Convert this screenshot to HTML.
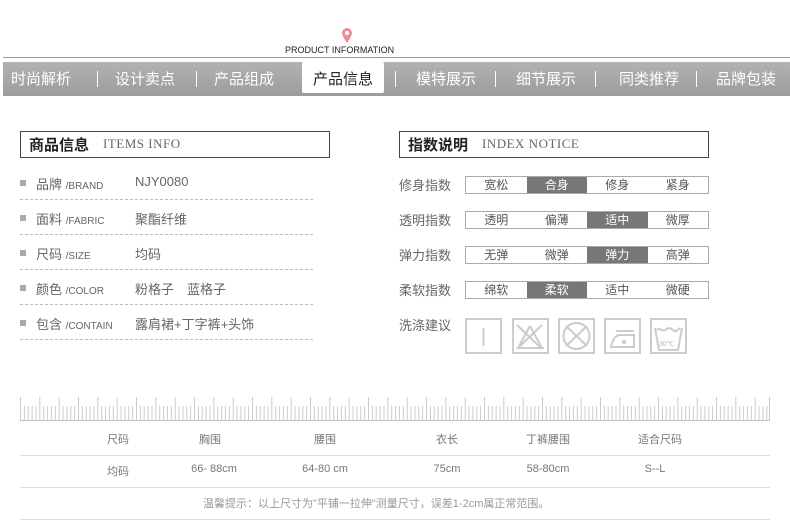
<!DOCTYPE html>
<html><head><meta charset="utf-8"><style>
*{margin:0;padding:0;box-sizing:border-box}
body{width:790px;height:528px;background:#fff;position:relative;overflow:hidden;font-family:"Liberation Sans","Noto Sans CJK SC",sans-serif;color:#555}
.a{position:absolute;white-space:nowrap}
.nav{position:absolute;left:3px;top:62px;width:787px;height:34px;background:linear-gradient(#b3b1b2,#9d9b9c)}
.nav span{position:absolute;top:6px;font-size:15px;color:#fff}
.sep{position:absolute;top:9px;width:1px;height:16px;background:#fff}
.box{position:absolute;height:27px;border:1px solid #444;width:310px}
.box b{position:absolute;left:8px;top:2px;font-size:15px;color:#222}
.box i{position:absolute;top:4px;font-style:normal;font-family:"Liberation Serif",serif;font-size:13px;color:#666;letter-spacing:0.5px}
.row{position:absolute;left:20px;font-size:13px;color:#666}
.sq{position:absolute;left:0;top:6px;width:6px;height:6px;background:#aaa}
.dash{position:absolute;left:20px;width:293px;border-top:1px dashed #bbb}
.lab{position:absolute;left:399px;font-size:13px;color:#666}
.opt{position:absolute;left:465px;width:244px;height:18px;border:1px solid #aaa;display:flex}
.opt div{flex:1;text-align:center;font-size:12px;line-height:16px;color:#555}
.opt .on{background:#777;color:#fff}
.hl{position:absolute;left:20px;width:750px;height:1px;background:#ddd}
.th{position:absolute;font-size:11px;color:#777;transform:translateX(-50%)}
</style></head><body>
<svg class="a" style="left:340px;top:27px" width="14" height="18" viewBox="0 0 14 18"><path d="M7 1a5 5 0 0 0-5 5c0 3 5 10 5 10s5-7 5-10a5 5 0 0 0-5-5z" fill="#f08c96"/><circle cx="7" cy="6" r="2" fill="#fff"/></svg>
<div class="a" style="left:285px;top:45px;font-size:9px;color:#222">PRODUCT INFORMATION</div>
<div class="a" style="left:3px;top:57px;width:787px;height:1px;background:#999"></div>
<div class="nav">
<span style="left:8px">时尚解析</span><div class="sep" style="left:94px"></div>
<span style="left:112px">设计卖点</span><div class="sep" style="left:193px"></div>
<span style="left:211px">产品组成</span>
<div style="position:absolute;left:299px;top:0;width:82px;height:31px;background:#fff;border-radius:2px"></div>
<span style="left:310px;color:#222">产品信息</span><div class="sep" style="left:392px"></div>
<span style="left:413px">模特展示</span><div class="sep" style="left:492px"></div>
<span style="left:513px">细节展示</span><div class="sep" style="left:592px"></div>
<span style="left:616px">同类推荐</span><div class="sep" style="left:693px"></div>
<span style="left:713px">品牌包装</span>
</div>

<div class="box" style="left:20px;top:131px"><b>商品信息</b><i style="left:82px">ITEMS INFO</i></div>
<div class="box" style="left:399px;top:131px"><b>指数说明</b><i style="left:82px">INDEX NOTICE</i></div>

<div class="row" style="top:174px"><div class="sq"></div><span class="a" style="left:16px">品牌 <small style="font-size:10px">/BRAND</small></span><span class="a" style="left:115px">NJY0080</span></div>
<div class="dash" style="top:199px"></div>
<div class="row" style="top:209px"><div class="sq"></div><span class="a" style="left:16px">面料 <small style="font-size:10px">/FABRIC</small></span><span class="a" style="left:115px">聚酯纤维</span></div>
<div class="dash" style="top:234px"></div>
<div class="row" style="top:244px"><div class="sq"></div><span class="a" style="left:16px">尺码 <small style="font-size:10px">/SIZE</small></span><span class="a" style="left:115px">均码</span></div>
<div class="dash" style="top:269px"></div>
<div class="row" style="top:279px"><div class="sq"></div><span class="a" style="left:16px">颜色 <small style="font-size:10px">/COLOR</small></span><span class="a" style="left:115px">粉格子　蓝格子</span></div>
<div class="dash" style="top:304px"></div>
<div class="row" style="top:314px"><div class="sq"></div><span class="a" style="left:16px">包含 <small style="font-size:10px">/CONTAIN</small></span><span class="a" style="left:115px">露肩裙+丁字裤+头饰</span></div>
<div class="dash" style="top:339px"></div>

<div class="lab" style="top:175px">修身指数</div>
<div class="opt" style="top:176px"><div>宽松</div><div class="on">合身</div><div>修身</div><div>紧身</div></div>
<div class="lab" style="top:210px">透明指数</div>
<div class="opt" style="top:211px"><div>透明</div><div>偏薄</div><div class="on">适中</div><div>微厚</div></div>
<div class="lab" style="top:245px">弹力指数</div>
<div class="opt" style="top:246px"><div>无弹</div><div>微弹</div><div class="on">弹力</div><div>高弹</div></div>
<div class="lab" style="top:280px">柔软指数</div>
<div class="opt" style="top:281px"><div>绵软</div><div class="on">柔软</div><div>适中</div><div>微硬</div></div>
<div class="lab" style="top:315px">洗涤建议</div>
<svg class="a" style="left:464px;top:316px" width="230" height="40" viewBox="0 0 230 40" fill="none" stroke="#ccc" stroke-width="2">
<rect x="2" y="3" width="35" height="34"/><line x1="19.5" y1="12" x2="19.5" y2="30"/>
<rect x="49" y="3" width="35" height="34"/><path d="M53 9l25 24M78 9l-25 24M54 32h26M66 10l-12 22M66 10l12 22"/>
<rect x="95" y="3" width="35" height="34"/><circle cx="112.5" cy="20" r="13"/><path d="M102 10l21 20M123 10l-21 20"/>
<rect x="141" y="3" width="35" height="34"/><path d="M147 31h23v-12h-14c-5 0-8 6-9 12zM152 15h18"/><circle cx="160" cy="26" r="1.2" fill="#ccc"/>
<rect x="187" y="3" width="35" height="34"/><path d="M191 12l4 22h19l4-22M193 14c3-3 5 2 8 0s5-3 8 0 4 0 7-2"/>
<text x="195" y="30" font-size="7" fill="#bbb" stroke="none" font-family="Liberation Sans">30℃</text>
</svg>

<svg class="a" style="left:20px;top:395px" width="752" height="28" viewBox="0 0 752 28">
<line x1="0" y1="25.5" x2="750" y2="25.5" stroke="#bbb"/>
<path stroke="#ccc" d="M0.5 2v24 M4.4 11v15 M8.2 11v15 M12.1 11v15 M16 11v15 M19.8 2v24 M23.7 11v15 M27.6 11v15 M31.4 11v15 M35.3 11v15 M39.2 2v24 M43 11v15 M46.9 11v15 M50.8 11v15 M54.6 11v15 M58.5 2v24 M62.4 11v15 M66.2 11v15 M70.1 11v15 M74 11v15 M77.8 2v24 M81.7 11v15 M85.6 11v15 M89.4 11v15 M93.3 11v15 M97.2 2v24 M101 11v15 M104.9 11v15 M108.8 11v15 M112.6 11v15 M116.5 2v24 M120.4 11v15 M124.2 11v15 M128.1 11v15 M132 11v15 M135.8 2v24 M139.7 11v15 M143.6 11v15 M147.4 11v15 M151.3 11v15 M155.2 2v24 M159 11v15 M162.9 11v15 M166.8 11v15 M170.6 11v15 M174.5 2v24 M178.4 11v15 M182.2 11v15 M186.1 11v15 M190 11v15 M193.8 2v24 M197.7 11v15 M201.6 11v15 M205.4 11v15 M209.3 11v15 M213.2 2v24 M217 11v15 M220.9 11v15 M224.8 11v15 M228.6 11v15 M232.5 2v24 M236.4 11v15 M240.2 11v15 M244.1 11v15 M248 11v15 M251.8 2v24 M255.7 11v15 M259.6 11v15 M263.4 11v15 M267.3 11v15 M271.2 2v24 M275 11v15 M278.9 11v15 M282.8 11v15 M286.6 11v15 M290.5 2v24 M294.4 11v15 M298.2 11v15 M302.1 11v15 M306 11v15 M309.8 2v24 M313.7 11v15 M317.6 11v15 M321.4 11v15 M325.3 11v15 M329.2 2v24 M333 11v15 M336.9 11v15 M340.8 11v15 M344.6 11v15 M348.5 2v24 M352.4 11v15 M356.2 11v15 M360.1 11v15 M364 11v15 M367.8 2v24 M371.7 11v15 M375.6 11v15 M379.4 11v15 M383.3 11v15 M387.2 2v24 M391 11v15 M394.9 11v15 M398.8 11v15 M402.6 11v15 M406.5 2v24 M410.4 11v15 M414.2 11v15 M418.1 11v15 M422 11v15 M425.8 2v24 M429.7 11v15 M433.6 11v15 M437.4 11v15 M441.3 11v15 M445.2 2v24 M449 11v15 M452.9 11v15 M456.8 11v15 M460.6 11v15 M464.5 2v24 M468.4 11v15 M472.2 11v15 M476.1 11v15 M480 11v15 M483.8 2v24 M487.7 11v15 M491.6 11v15 M495.4 11v15 M499.3 11v15 M503.2 2v24 M507 11v15 M510.9 11v15 M514.8 11v15 M518.6 11v15 M522.5 2v24 M526.4 11v15 M530.2 11v15 M534.1 11v15 M538 11v15 M541.8 2v24 M545.7 11v15 M549.6 11v15 M553.4 11v15 M557.3 11v15 M561.2 2v24 M565 11v15 M568.9 11v15 M572.8 11v15 M576.6 11v15 M580.5 2v24 M584.4 11v15 M588.2 11v15 M592.1 11v15 M596 11v15 M599.8 2v24 M603.7 11v15 M607.6 11v15 M611.4 11v15 M615.3 11v15 M619.2 2v24 M623 11v15 M626.9 11v15 M630.8 11v15 M634.6 11v15 M638.5 2v24 M642.4 11v15 M646.2 11v15 M650.1 11v15 M654 11v15 M657.8 2v24 M661.7 11v15 M665.6 11v15 M669.4 11v15 M673.3 11v15 M677.2 2v24 M681 11v15 M684.9 11v15 M688.8 11v15 M692.6 11v15 M696.5 2v24 M700.4 11v15 M704.2 11v15 M708.1 11v15 M712 11v15 M715.8 2v24 M719.7 11v15 M723.6 11v15 M727.4 11v15 M731.3 11v15 M735.2 2v24 M739 11v15 M742.9 11v15 M746.8 11v15 M749.5 2v24"/>
</svg>

<div class="th" style="left:118px;top:431px">尺码</div>
<div class="th" style="left:210px;top:431px">胸围</div>
<div class="th" style="left:325px;top:431px">腰围</div>
<div class="th" style="left:447px;top:431px">衣长</div>
<div class="th" style="left:548px;top:431px">丁裤腰围</div>
<div class="th" style="left:660px;top:431px">适合尺码</div>
<div class="hl" style="top:455px"></div>
<div class="th" style="left:118px;top:463px">均码</div>
<div class="th" style="left:214px;top:463px">66- 88cm</div>
<div class="th" style="left:325px;top:463px">64-80 cm</div>
<div class="th" style="left:447px;top:463px">75cm</div>
<div class="th" style="left:548px;top:463px">58-80cm</div>
<div class="th" style="left:655px;top:463px">S--L</div>
<div class="hl" style="top:487px"></div>
<div class="a" style="left:203px;top:495px;font-size:11px;color:#999">温馨提示：以上尺寸为"平铺一拉伸"测量尺寸，误差1-2cm属正常范围。</div>
<div class="hl" style="top:519px"></div>
</body></html>
